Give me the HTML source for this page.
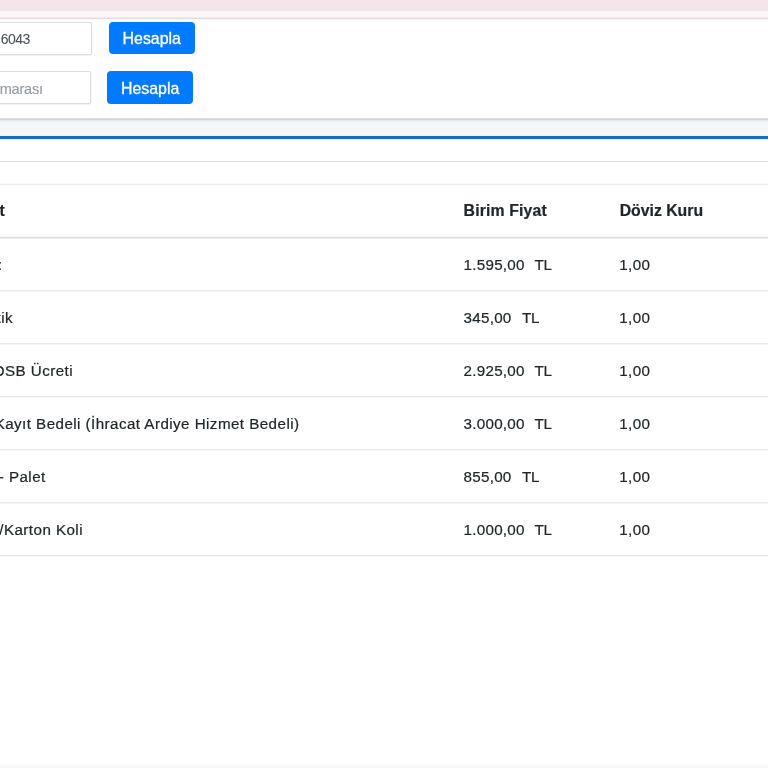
<!DOCTYPE html>
<html lang="tr">
<head>
<meta charset="utf-8">
<title>Hesapla</title>
<style>
*{box-sizing:border-box}
html,body{margin:0;padding:0}
body{width:768px;height:768px;overflow:hidden;position:relative;background:#f5f6f8;font-family:"Liberation Sans",sans-serif;color:#212529;font-size:15.2px;letter-spacing:.435px}
.abs{position:absolute}
.band1{left:0;top:0;width:768px;height:11px;background:linear-gradient(#f4e5ea 0,#f4e5ea 60%,#efe5e9 100%)}
.band2{left:0;top:11px;width:768px;height:7px;background:#fdf6f8}
.bl{left:0;width:768px;height:1px}
.card1{left:-20px;top:18px;width:808px;height:100px;background:#fff}
.sh1{left:0;top:118px;width:768px;height:5px;background:linear-gradient(to bottom,#dedee0 0,#dedee0 1px,#d4d4d6 1px,#d4d4d6 2px,#e8e8ea 2px,#e8e8ea 3px,#f0f0f2 3px,#f0f0f2 4px,#f4f4f6 4px,#f4f4f6 5px)}
.card2{left:-20px;top:136px;width:808px;height:660px;background:#fff;border-top:3px solid #1c6bc0;box-shadow:0 -1px 0 #e9f3fa,inset 0 1px 0 #eef8fd}
.inp{left:-60px;width:152px;height:33px;border:1px solid #dcdcdd;border-radius:2px;background:#fff;box-shadow:0 1px 0 rgba(0,0,0,.05),1px 0 0 rgba(0,0,0,.02)}
.btn{width:86.5px;height:32px;background:#007bff;border-radius:4px;color:#fff;text-align:center;line-height:32px;font-size:15.9px;letter-spacing:0;-webkit-text-stroke:.3px #fff}
.hl{left:0;width:768px;height:1px;background:#e9e9e9;box-shadow:0 1px 0 #f6f6f6}
.t{white-space:nowrap;line-height:20px;height:20px;-webkit-text-stroke:.2px currentColor}
.b{font-weight:bold;font-size:15.8px;letter-spacing:0}
.p{letter-spacing:.25px}
.tl{letter-spacing:-.3px}
</style>
</head>
<body>
<div id="root" style="position:absolute;left:0;top:0;width:768px;height:768px;overflow:hidden;will-change:transform">
<div class="abs band1"></div>
<div class="abs band2"></div>
<div class="abs card1"></div><div class="abs sh1"></div>
<div class="abs bl" style="top:17px;background:#f1e9ec"></div><div class="abs bl" style="top:18px;background:#e6dbdf"></div><div class="abs bl" style="top:19px;background:#faf7f8"></div>
<div class="abs inp" style="top:22px"></div>
<div class="abs t" style="right:738.2px;top:28.6px;font-size:14px;letter-spacing:-.5px;color:#495057;-webkit-text-stroke:.05px currentColor"><span style="margin-right:1.3px">34</span>6043</div>
<div class="abs btn" style="left:108.7px;top:21.9px;width:86.1px;height:31.8px;line-height:33.8px">Hesapla</div>
<div class="abs inp" style="top:71px;left:-61px"></div>
<div class="abs t" style="right:725.2px;top:78.8px;font-size:14.5px;letter-spacing:-.2px;color:#989ea4">Takip Numarası</div>
<div class="abs btn" style="left:106.9px;top:71.1px;width:86.5px;height:32.6px;line-height:35.6px">Hesapla</div>

<div class="abs card2"></div>
<div class="abs" style="left:0;top:762px;width:768px;height:6px;background:linear-gradient(#fff,#f6f6f6)"></div>
<div class="abs hl" style="top:161px;background:#e1e1e1;box-shadow:none"></div>
<div class="abs hl" style="top:184px;background:#ebebeb;box-shadow:0 -1px 0 #fafafa"></div>
<div class="abs hl" style="top:237px;background:#dcdcdc;box-shadow:0 1px 0 #ededed,0 -1px 0 #f7f7f7"></div>
<div class="abs hl" style="top:290px"></div>
<div class="abs hl" style="top:343px"></div>
<div class="abs hl" style="top:396px"></div>
<div class="abs hl" style="top:449px"></div>
<div class="abs hl" style="top:502px"></div>
<div class="abs hl" style="top:555px"></div>

<div class="abs t b" style="right:763.2px;top:201px">Hizmet</div>
<div class="abs t b" style="left:463.6px;top:201px;letter-spacing:.15px">Birim Fiyat</div>
<div class="abs t b" style="left:619.7px;top:201px">Döviz Kuru</div>

<div class="abs t" style="right:765.3px;top:255px">Navlun Ücreti:</div>
<div class="abs t p" style="left:463.6px;top:255px">1.595,00</div><div class="abs t tl" style="left:534.6px;top:255px">TL</div>
<div class="abs t" style="left:619.2px;top:255px">1,00</div>

<div class="abs t" style="right:755px;top:308px">Lojistik</div>
<div class="abs t p" style="left:463.6px;top:308px">345,00</div><div class="abs t tl" style="left:522px;top:308px">TL</div>
<div class="abs t" style="left:619.2px;top:308px">1,00</div>

<div class="abs t" style="right:695px;top:361px">Gümrük OSB Ücreti</div>
<div class="abs t p" style="left:463.6px;top:361px">2.925,00</div><div class="abs t tl" style="left:534.6px;top:361px">TL</div>
<div class="abs t" style="left:619.2px;top:361px">1,00</div>

<div class="abs t" style="right:468.5px;top:414px">Ordino Kayıt Bedeli (İhracat Ardiye Hizmet Bedeli)</div>
<div class="abs t p" style="left:463.6px;top:414px">3.000,00</div><div class="abs t tl" style="left:534.6px;top:414px">TL</div>
<div class="abs t" style="left:619.2px;top:414px">1,00</div>

<div class="abs t" style="right:722.3px;top:467px">Ambalaj - Palet</div>
<div class="abs t p" style="left:463.6px;top:467px">855,00</div><div class="abs t tl" style="left:522px;top:467px">TL</div>
<div class="abs t" style="left:619.2px;top:467px">1,00</div>

<div class="abs t" style="right:685px;top:520px">Ambalaj - Kutu/Karton Koli</div>
<div class="abs t p" style="left:463.6px;top:520px">1.000,00</div><div class="abs t tl" style="left:534.6px;top:520px">TL</div>
<div class="abs t" style="left:619.2px;top:520px">1,00</div>
</div>
</body>
</html>
